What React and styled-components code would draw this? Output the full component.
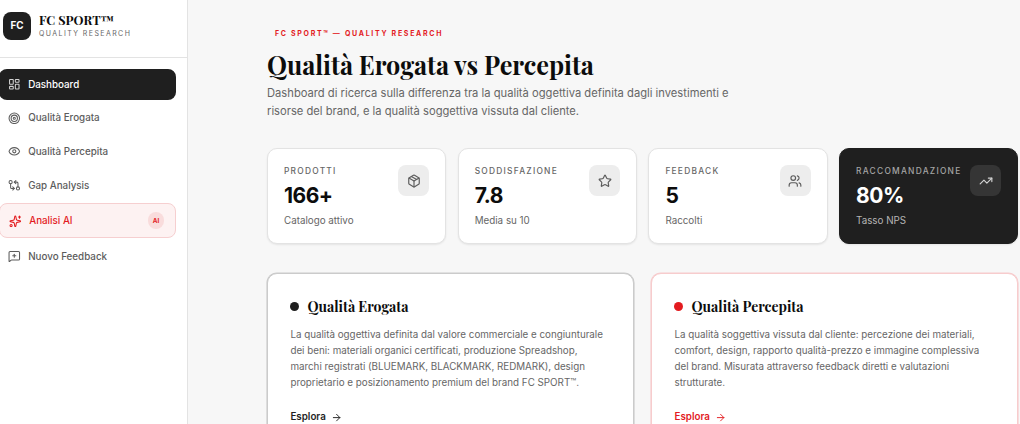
import {
  ArrowRight,
  Eye,
  GitCompareArrows,
  LayoutDashboard,
  MessageSquarePlus,
  Package,
  Sparkles,
  Star,
  Target,
  TrendingUp,
  Users,
} from 'lucide-react';
import styled, { createGlobalStyle, css } from 'styled-components';

const GlobalStyles = createGlobalStyle`
  :root {
    --black: #0c0c0c;
    --ink: #1f1f1f;
    --red: #e31b1f;
    --gray: #666;
    --lightGray: #e3e3e3;
    --offWhite: #f7f7f7;
    --sans: Inter, 'Liberation Sans', sans-serif;
    --serif: 'Playfair Display', 'Liberation Serif', serif;
  }
  *, *::before, *::after {
    box-sizing: border-box;
  }
  body {
    margin: 0;
    overflow: hidden;
    background: var(--offWhite);
    color: var(--black);
    font-family: var(--sans);
  }
  h1, h2, p {
    margin: 0;
  }
  svg {
    display: block;
    flex-shrink: 0;
  }
`;

const PageStyles = styled.div`
  display: grid;
  grid-template-columns: 188px 1fr;
  height: 424px;
  overflow: hidden;
`;

const Sidebar = styled.aside`
  background: white;
  border-right: 1px solid var(--lightGray);
`;

const Brand = styled.div`
  display: flex;
  align-items: center;
  gap: 8px;
  height: 58px;
  padding: 0 0 6px 3px;
  border-bottom: 1px solid var(--lightGray);
`;

const Logo = styled.div`
  display: grid;
  place-items: center;
  width: 28px;
  height: 28px;
  border-radius: 8px;
  background: var(--ink);
  color: white;
  font-size: 9.8px;
  font-weight: 700;
`;

const BrandName = styled.div`
  font-family: var(--serif);
  font-size: 12.6px;
  font-weight: 700;
  line-height: 16px;
  white-space: nowrap;
`;

const BrandTagline = styled.div`
  color: var(--gray);
  font-size: 7px;
  line-height: 11px;
  letter-spacing: 1.42px;
  white-space: nowrap;
`;

const Nav = styled.nav`
  display: flex;
  flex-direction: column;
  gap: 3px;
  margin-left: -1.2px;
  padding: 11px 11px 0 0;
`;

const NavItem = styled.a`
  display: flex;
  align-items: center;
  gap: 7.6px;
  height: 30.6px;
  padding: 0 11px 0 9.2px;
  border-radius: 8px;
  color: #5c5c5c;
  font-size: 9.8px;
  font-weight: 500;
  ${({ $active }) =>
    $active &&
    css`
      background: var(--ink);
      color: white;
      svg {
        opacity: 0.8;
      }
    `}
  ${({ $highlight }) =>
    $highlight &&
    css`
      height: 35px;
      border: 1px solid #f6cfd0;
      background: #fdf2f2;
      color: var(--red);
    `}
`;

const NavBadge = styled.span`
  display: grid;
  place-items: center;
  width: 16px;
  height: 17px;
  margin-left: auto;
  border-radius: 8px;
  background: #f9dcdc;
  font-size: 6.3px;
  font-weight: 700;
`;

const Main = styled.main`
  width: 830.4px;
  padding: 27px 0 0 79px;
`;

const Eyebrow = styled.p`
  padding-left: 8px;
  color: var(--red);
  font-size: 7px;
  font-weight: 700;
  line-height: 13px;
  letter-spacing: 1.7px;
`;

const Title = styled.h1`
  margin-top: 8px;
  font-family: var(--serif);
  font-size: 25.2px;
  font-weight: 700;
  line-height: 34px;
  white-space: nowrap;
`;

const Intro = styled.p`
  margin-top: 2px;
  color: var(--gray);
  font-size: 11.2px;
  line-height: 18.2px;
  white-space: pre-line;
`;

const Stats = styled.div`
  display: grid;
  grid-template-columns: repeat(4, 1fr);
  gap: 11.4px;
  margin-top: 27.6px;
`;

const StatCard = styled.div`
  display: flex;
  justify-content: space-between;
  height: 96.2px;
  padding: 16px 16px 0;
  border: 1px solid ${({ $dark }) => ($dark ? '#1f1f1f' : '#e3e3e3')};
  border-radius: 10px;
  background: ${({ $dark }) => ($dark ? '#1f1f1f' : 'white')};
  color: ${({ $dark }) => ($dark ? 'white' : '#0c0c0c')};
  box-shadow: 0 1px 2px rgba(0, 0, 0, 0.08);
`;

const StatText = styled.div`
  min-width: 0;
  white-space: nowrap;
`;

const StatLabel = styled.div`
  color: ${({ $dark }) => ($dark ? '#a5a5a5' : '#666')};
  font-size: 8.4px;
  font-weight: 500;
  line-height: 12px;
  letter-spacing: 1.24px;
`;

const StatValue = styled.div`
  margin-top: 5px;
  font-size: 21px;
  font-weight: 700;
  line-height: 27px;
  letter-spacing: -0.5px;
`;

const StatNote = styled.div`
  margin-top: 4px;
  color: ${({ $dark }) => ($dark ? '#b5b5b5' : '#666')};
  font-size: 9.8px;
  line-height: 15px;
`;

const StatIcon = styled.div`
  display: grid;
  place-items: center;
  width: 31px;
  height: 31px;
  flex-shrink: 0;
  border-radius: 8px;
  background: ${({ $dark }) => ($dark ? '#353535' : '#ededed')};
  color: ${({ $dark }) => ($dark ? '#d2d2d2' : '#5c5c5c')};
`;

const Panels = styled.div`
  display: grid;
  grid-template-columns: 1fr 1fr;
  gap: 16.8px;
  margin-top: 28.8px;
`;

const Panel = styled.section`
  height: 190px;
  padding: 22px 22.4px 0;
  border: 1px solid ${({ $accent }) => ($accent ? '#f7cccd' : '#cbcbcb')};
  border-radius: 10px;
  background: white;
  box-shadow: 0 0 0 0.6px ${({ $accent }) => ($accent ? '#f7cccd' : '#cbcbcb')};
`;

const PanelTitle = styled.h2`
  display: flex;
  align-items: center;
  gap: 8px;
  font-family: var(--serif);
  font-size: 14px;
  font-weight: 700;
  line-height: 22px;
  &::before {
    content: '';
    width: 9px;
    height: 9px;
    border-radius: 50%;
    background: ${({ $accent }) => ($accent ? 'var(--red)' : 'var(--ink)')};
  }
`;

const PanelText = styled.p`
  margin-top: 9.5px;
  color: var(--gray);
  font-size: 9.8px;
  line-height: 15.9px;
  white-space: pre;
`;

const PanelLink = styled.a`
  display: flex;
  align-items: center;
  gap: 5.6px;
  margin-top: 18px;
  color: ${({ $accent }) => ($accent ? 'var(--red)' : 'var(--ink)')};
  font-size: 9.8px;
  font-weight: 600;
  line-height: 16px;
`;

const navItems = [
  { label: 'Dashboard', icon: LayoutDashboard, active: true },
  { label: 'Qualità Erogata', icon: Target },
  { label: 'Qualità Percepita', icon: Eye },
  { label: 'Gap Analysis', icon: GitCompareArrows },
  { label: 'Analisi AI', icon: Sparkles, badge: 'AI' },
  { label: 'Nuovo Feedback', icon: MessageSquarePlus },
];

const stats = [
  { label: 'PRODOTTI', value: '166+', note: 'Catalogo attivo', icon: Package },
  { label: 'SODDISFAZIONE', value: '7.8', note: 'Media su 10', icon: Star },
  { label: 'FEEDBACK', value: '5', note: 'Raccolti', icon: Users },
  {
    label: 'RACCOMANDAZIONE',
    value: '80%',
    note: 'Tasso NPS',
    icon: TrendingUp,
    dark: true,
  },
];

const panels = [
  {
    title: 'Qualità Erogata',
    text: `La qualità oggettiva definita dal valore commerciale e congiunturale
dei beni: materiali organici certificati, produzione Spreadshop,
marchi registrati (BLUEMARK, BLACKMARK, REDMARK), design
proprietario e posizionamento premium del brand FC SPORT™.`,
  },
  {
    title: 'Qualità Percepita',
    text: `La qualità soggettiva vissuta dal cliente: percezione dei materiali,
comfort, design, rapporto qualità-prezzo e immagine complessiva
del brand. Misurata attraverso feedback diretti e valutazioni
strutturate.`,
    accent: true,
  },
];

export default function App() {
  return (
    <>
      <GlobalStyles />
      <PageStyles>
        <Sidebar>
          <Brand>
            <Logo>FC</Logo>
            <div>
              <BrandName>FC SPORT™</BrandName>
              <BrandTagline>QUALITY RESEARCH</BrandTagline>
            </div>
          </Brand>
          <Nav>
            {navItems.map(({ label, icon: Icon, active, badge }) => (
              <NavItem key={label} $active={active} $highlight={!!badge}>
                <Icon size={12.6} />
                {label}
                {badge && <NavBadge>{badge}</NavBadge>}
              </NavItem>
            ))}
          </Nav>
        </Sidebar>
        <Main>
          <Eyebrow>FC SPORT™ — QUALITY RESEARCH</Eyebrow>
          <Title>Qualità Erogata vs Percepita</Title>
          <Intro>
            {`Dashboard di ricerca sulla differenza tra la qualità oggettiva definita dagli investimenti e
risorse del brand, e la qualità soggettiva vissuta dal cliente.`}
          </Intro>
          <Stats>
            {stats.map(({ label, value, note, icon: Icon, dark }) => (
              <StatCard key={label} $dark={dark}>
                <StatText>
                  <StatLabel $dark={dark}>{label}</StatLabel>
                  <StatValue>{value}</StatValue>
                  <StatNote $dark={dark}>{note}</StatNote>
                </StatText>
                <StatIcon $dark={dark}>
                  <Icon size={14} />
                </StatIcon>
              </StatCard>
            ))}
          </Stats>
          <Panels>
            {panels.map(({ title, text, accent }) => (
              <Panel key={title} $accent={accent}>
                <PanelTitle $accent={accent}>{title}</PanelTitle>
                <PanelText>{text}</PanelText>
                <PanelLink $accent={accent}>
                  Esplora
                  <ArrowRight size={11.2} />
                </PanelLink>
              </Panel>
            ))}
          </Panels>
        </Main>
      </PageStyles>
    </>
  );
}
